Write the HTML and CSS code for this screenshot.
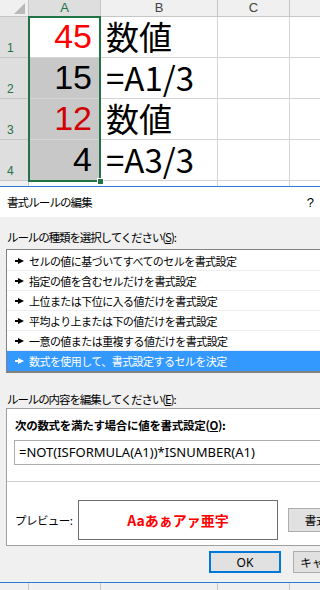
FILE: index.html
```html
<!DOCTYPE html>
<html lang="ja">
<head>
    <meta charset="UTF-8">
    <meta name="viewport" content="width=device-width, initial-scale=1.0">
    <title>書式ルールの編集</title>
    <link rel="stylesheet" href="styles.css">
</head>
<body>
    <div class="sheet">
        <div class="grid">
            <div class="hd corner">
                <svg class="corner-tri" width="11" height="11" viewBox="0 0 11 11"><polygon points="11,0 11,11 0,11" fill="#b9b9b9"/></svg>
            </div>
            <div class="hd col sel">A</div>
            <div class="hd col">B</div>
            <div class="hd col">C</div>
            <div class="hd col"></div>

            <div class="hd row sel">1</div>
            <div class="cell num active red">45</div>
            <div class="cell txt">数値</div>
            <div class="cell"></div>
            <div class="cell"></div>

            <div class="hd row sel">2</div>
            <div class="cell num shade">15</div>
            <div class="cell txt">=A1/3</div>
            <div class="cell"></div>
            <div class="cell"></div>

            <div class="hd row sel">3</div>
            <div class="cell num shade dark-red">12</div>
            <div class="cell txt">数値</div>
            <div class="cell"></div>
            <div class="cell"></div>

            <div class="hd row sel">4</div>
            <div class="cell num shade">4</div>
            <div class="cell txt">=A3/3</div>
            <div class="cell"></div>
            <div class="cell"></div>

            <div class="hd row"></div>
            <div class="cell"></div>
            <div class="cell"></div>
            <div class="cell"></div>
            <div class="cell"></div>
        </div>
        <div class="selection"><span class="fill-handle"></span></div>
    </div>

    <div class="dialog">
        <div class="titlebar">
            <span class="title">書式ルールの編集</span>
            <span class="help">?</span>
            <span class="close"></span>
        </div>
        <div class="dialog-body">
            <div class="label">ルールの種類を選択してください(<u>S</u>):</div>
            <ul class="rule-list">
                <li><svg class="arrow" width="9" height="6" viewBox="0 0 9 6"><rect x="0" y="2" width="4" height="2"/><polygon points="3,0 9,3 3,6"/></svg>セルの値に基づいてすべてのセルを書式設定</li>
                <li><svg class="arrow" width="9" height="6" viewBox="0 0 9 6"><rect x="0" y="2" width="4" height="2"/><polygon points="3,0 9,3 3,6"/></svg>指定の値を含むセルだけを書式設定</li>
                <li><svg class="arrow" width="9" height="6" viewBox="0 0 9 6"><rect x="0" y="2" width="4" height="2"/><polygon points="3,0 9,3 3,6"/></svg>上位または下位に入る値だけを書式設定</li>
                <li><svg class="arrow" width="9" height="6" viewBox="0 0 9 6"><rect x="0" y="2" width="4" height="2"/><polygon points="3,0 9,3 3,6"/></svg>平均より上または下の値だけを書式設定</li>
                <li><svg class="arrow" width="9" height="6" viewBox="0 0 9 6"><rect x="0" y="2" width="4" height="2"/><polygon points="3,0 9,3 3,6"/></svg>一意の値または重複する値だけを書式設定</li>
                <li class="selected"><svg class="arrow" width="9" height="6" viewBox="0 0 9 6"><rect x="0" y="2" width="4" height="2"/><polygon points="3,0 9,3 3,6"/></svg>数式を使用して、書式設定するセルを決定</li>
            </ul>

            <div class="label label-edit">ルールの内容を編集してください(<u>E</u>):</div>
            <div class="panel">
                <div class="panel-title">次の数式を満たす場合に値を書式設定(<u>O</u>):</div>
                <div class="formula">=NOT(ISFORMULA(A1))*ISNUMBER(A1)</div>
                <div class="divider"></div>
                <div class="preview-row">
                    <span class="preview-label">プレビュー:</span>
                    <div class="preview-box">Aaあぁアァ亜宇</div>
                    <button class="btn format-btn">書式(<u>F</u>)...</button>
                </div>
            </div>

            <div class="buttons">
                <button class="btn ok">OK</button>
                <button class="btn">キャンセル</button>
            </div>
        </div>
    </div>

    <div class="sheet-bottom">
        <div class="hd corner"></div>
        <div class="hd col"></div>
        <div class="hd col"></div>
        <div class="hd col"></div>
        <div class="hd col"></div>
    </div>
</body>
</html>
```

FILE: styles.css
```css
html, body {
    margin: 0;
    padding: 0;
    width: 320px;
    height: 590px;
    overflow: hidden;
    background-color: #ffffff;
}

body {
    font-family: "Noto Sans CJK JP", sans-serif;
}

/* シート */
.sheet {
    position: relative;
    height: 186px;
    overflow: hidden;
}

.grid {
    display: grid;
    grid-template-columns: 29px 72px 117px 72px 40px;
    grid-template-rows: 17px 41px 41px 41px 41px 10px;
}

.hd,
.cell {
    box-sizing: border-box;
    border-right: 1px solid #d4d4d4;
    border-bottom: 1px solid #d4d4d4;
}

.hd {
    background-color: #f0f0f0;
    color: #444444;
    font-family: "Liberation Sans", Arial, sans-serif;
    border-color: #c6c6c6;
}

.hd.col {
    font-size: 13px;
    text-align: center;
    line-height: 16px;
}

.hd.row {
    font-size: 12px;
    line-height: 14px;
    display: flex;
    align-items: flex-end;
    padding: 0 0 2px 7px;
}

.hd.sel {
    background-color: #dedede;
    color: #217346;
}

.corner {
    position: relative;
}

.corner-tri {
    position: absolute;
    right: 3px;
    bottom: 2px;
}

.cell {
    display: flex;
    align-items: flex-end;
    font-size: 34px;
    line-height: 34px;
    color: #000000;
}

.cell.num {
    justify-content: flex-end;
    padding: 0 8px 4px 0;
    font-family: "Liberation Sans", Arial, sans-serif;
}

.cell.txt {
    padding: 0 0 3px 5px;
    font-family: "Noto Sans CJK JP", sans-serif;
    font-size: 33px;
    line-height: 35px;
}

.cell.shade {
    background-color: #c8c8c8;
}

.red {
    color: #ff0000;
}

.dark-red {
    color: #d20000;
}

.selection {
    position: absolute;
    left: 28px;
    top: 16px;
    width: 73px;
    height: 166px;
    box-sizing: border-box;
    border: 2px solid #217346;
}

.fill-handle {
    position: absolute;
    right: -5px;
    bottom: -5px;
    width: 5px;
    height: 5px;
    background-color: #217346;
    border: 1px solid #ffffff;
}

/* ダイアログ */
.dialog {
    width: 400px;
    border-top: 1px solid #2b7bd4;
    border-bottom: 1px solid #2b7bd4;
    color: #000000;
    font-size: 11px;
    letter-spacing: -0.55px;
}

.titlebar {
    display: flex;
    align-items: center;
    height: 30px;
    background-color: #ffffff;
    padding-left: 7px;
}

.title {
    font-size: 11.5px;
    letter-spacing: -0.9px;
}

.help {
    margin-left: auto;
    width: 20px;
    text-align: center;
    font-family: "Liberation Sans", Arial, sans-serif;
    font-size: 13px;
}

.close {
    width: 80px;
}

.dialog-body {
    background-color: #f0f0f0;
    padding: 12px 0 9px 6px;
}

.label {
    line-height: 16px;
    padding-left: 1px;
    font-size: 11.5px;
    letter-spacing: -1.1px;
}

.rule-list {
    list-style: none;
    margin: 4px 0 0;
    padding: 1px 0 0;
    background-color: #ffffff;
    border: 1px solid #828282;
    border-bottom-width: 2px;
}

.rule-list li {
    display: flex;
    align-items: center;
    height: 20px;
    box-sizing: border-box;
    border-bottom: 1px solid #eeeeee;
    padding-left: 8px;
}

.rule-list li.selected {
    background-color: #3399ff;
    color: #ffffff;
    border-bottom: none;
}

.arrow {
    fill: #000000;
    margin-right: 5px;
}

.selected .arrow {
    fill: #ffffff;
}

.label-edit {
    margin-top: 18px;
}

.panel {
    margin-top: 1px;
    background-color: #ffffff;
    border: 1px solid #a0a0a0;
    padding: 8px 0 5px 8px;
}

.panel-title {
    font-weight: bold;
    font-size: 11.5px;
    line-height: 16px;
    letter-spacing: -0.3px;
}

.formula {
    margin: 7px 0 0 -1px;
    height: 25px;
    box-sizing: border-box;
    border: 1px solid #adadad;
    padding-left: 4px;
    line-height: 23px;
    font-family: "Noto Sans", sans-serif;
    font-size: 13px;
    letter-spacing: 0;
}

.divider {
    margin: 16px 0 0 -8px;
    border-top: 1px solid #cfcfcf;
}

.preview-row {
    display: flex;
    align-items: center;
    margin-top: 18px;
}

.preview-label {
    width: 63px;
    font-size: 11.5px;
}

.preview-box {
    width: 200px;
    height: 40px;
    box-sizing: border-box;
    border: 1px solid #6d6d6d;
    display: flex;
    align-items: center;
    justify-content: center;
    color: #ff0000;
    font-weight: bold;
    font-size: 14px;
    letter-spacing: 0;
}

.btn {
    font-family: "Noto Sans CJK JP", sans-serif;
    font-size: 11.5px;
    background-color: #e1e1e1;
    border: 1px solid #adadad;
    color: #000000;
    padding: 0;
    margin: 0;
}

.format-btn {
    margin-left: 10px;
    width: 80px;
    height: 24px;
    flex-shrink: 0;
}

.buttons {
    display: flex;
    gap: 12px;
    margin-top: 5px;
    padding-left: 203px;
}

.buttons .btn {
    width: 72px;
    height: 22px;
    flex-shrink: 0;
}

.btn.ok {
    border: 2px solid #0078d7;
    font-family: "Noto Sans", sans-serif;
    font-size: 12px;
}

.sheet-bottom {
    display: grid;
    grid-template-columns: 29px 72px 117px 72px 40px;
    height: 10px;
}

.sheet-bottom .hd {
    border-bottom: none;
}
```
